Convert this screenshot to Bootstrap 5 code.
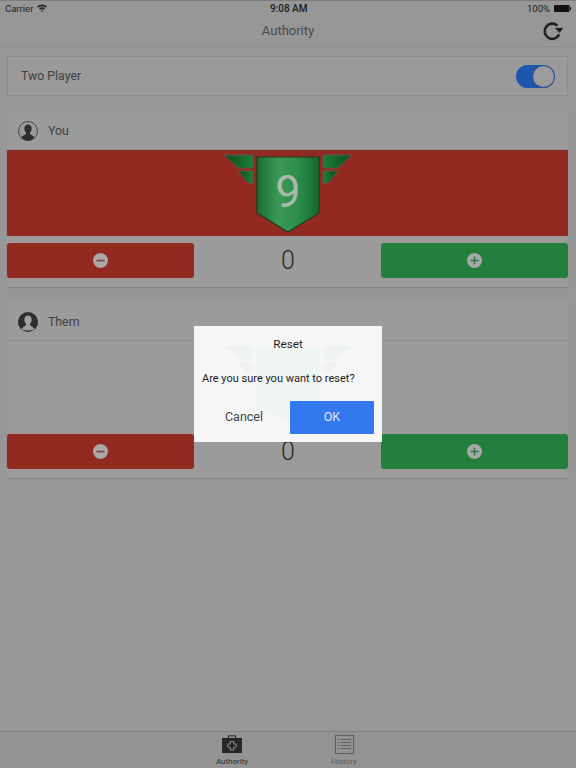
<!DOCTYPE html>
<html lang="en">
<head>
<meta charset="UTF-8" />
<meta name="viewport" content="width=device-width, initial-scale=1.0" />
<title>Authority</title>
<link rel="stylesheet" href="https://cdn.jsdelivr.net/npm/bootstrap@5.3.2/dist/css/bootstrap.min.css" />
<style>
  html, body { height: 100%; }
  body { font-family: Roboto, "Liberation Sans", sans-serif; background: #979797; color: #3a3a3a; }
  .app { width: 576px; height: 768px; overflow: hidden; position: relative; }
  .status-bar { height: 15px; font-size: 9.5px; line-height: 15px; color: #1c1c1c; padding: 0 5px; border-top: 1px solid #7d7d7d; }
  .status-time { font-weight: 500; font-size: 10px; margin-left: 3px; }
  .title-bar { height: 32px; border-bottom: 1px solid #8d8d8d; position: relative; font-size: 13px; color: #4a4a4a; }
  .refresh { position: absolute; right: 12px; top: 6px; }
  .content { padding: 9px 8px 0 7px; }
  .switch-card { height: 40px; background: #9a9a9a; border: 1px solid #8c8c8c; border-radius: 0; padding: 0 12px 0 13px; font-size: 12.3px; margin-bottom: 15px; color: #404040; }
  .toggle { width: 39px; height: 23px; border-radius: 12px; background: #1f56ad; position: relative; }
  .toggle::after { content: ""; position: absolute; right: 1px; top: 1px; width: 21px; height: 21px; border-radius: 50%; background: #9c9c9c; box-shadow: 0 0 1px #333; }
  .player-card { background: #9b9b9b; border: 0; border-radius: 0; box-shadow: 0 1px 1px #858585; margin-bottom: 15px; height: 176px; }
  .player-head { height: 39px; padding: 2px 10px 0 11px; border-bottom: 1px solid #8f8f8f; font-size: 12.3px; gap: 10px; color: #404040; }
  .level-band { height: 86px; display: flex; justify-content: center; align-items: flex-start; padding-top: 4px; }
  .level-band.active { background: #932a22; }
  .score-row { height: 35px; margin-top: 7px; }
  .score-btn { width: 187px; height: 35px; border: 0; padding: 0; border-radius: 3px; display: flex; align-items: center; justify-content: center; }
  .score-btn.minus { background: #932a22; }
  .score-btn.plus { background: #22803c; }
  .score-value { font-size: 25px; color: #2a2a2a; line-height: 35px; font-weight: 300; padding-left: 1px; }
  .tab-bar { position: absolute; left: 0; right: 0; bottom: 0; height: 37px; border-top: 1px solid #828282; background: #939393; }
  .tab-item { position: absolute; top: 3px; width: 60px; text-align: center; font-size: 8px; line-height: 9px; }
  .tab-item svg { margin-bottom: 3px; }
  .tab-one { left: 202px; color: #2c2c2c; }
  .tab-two { left: 314px; color: #5c5c5c; }
  .alert-box { position: absolute; left: 194px; top: 326px; width: 188px; height: 116px; background: rgba(252,252,252,.94); color: #1e1e1e; font-size: 11px; z-index: 5; }
  .alert-title { font-size: 11.7px; text-align: center; padding-top: 11px; line-height: 15px; }
  .alert-text { padding: 0 8px; margin-top: 19px; line-height: 15px; white-space: nowrap; }
  .alert-actions { display: flex; gap: 4px; padding: 0 8px; margin-top: 15px; }
  .alert-actions .btn { width: 84px; height: 33px; padding: 0; font-size: 12.5px; border: 0; border-radius: 1px; }
  .alert-actions .btn-cancel { color: #444; background: transparent; }
  .alert-actions .btn-ok { background: #3478f0; color: #dfe9fb; }
</style>
</head>
<body>
<div class="app">
  <div class="status-bar d-flex justify-content-between align-items-center">
    <span class="d-flex align-items-center gap-1">Carrier
      <svg width="10" height="8" viewBox="0 0 10 8"><path d="M0 2.6A7.2 7.2 0 0 1 10 2.6L8.9 3.8A5.6 5.6 0 0 0 1.1 3.8ZM2 4.7A4.4 4.4 0 0 1 8 4.7L6.9 5.8A2.8 2.8 0 0 0 3.1 5.8ZM3.9 6.7A1.6 1.6 0 0 1 6.1 6.7L5 8Z" fill="#222"/></svg>
    </span>
    <span class="status-time">9:08 AM</span>
    <span class="d-flex align-items-center gap-1">100%
      <svg width="17" height="7" viewBox="0 0 17 7"><rect width="15.5" height="7" rx="1" fill="#111"/><rect x="15.8" y="2" width="1.2" height="3" fill="#111"/></svg>
    </span>
  </div>
  <div class="title-bar d-flex align-items-center justify-content-center">
    Authority
    <svg class="refresh" width="22" height="22" viewBox="0 0 22 22"><path d="M17.2 13.4A7.6 7.6 0 1 1 15.4 4.6" fill="none" stroke="#222" stroke-width="2.6"/><path d="M12.8 7L21.4 6.8L17.6 12Z" fill="#222"/></svg>
  </div>

  <div class="content">
    <div class="card switch-card flex-row align-items-center justify-content-between">
      <span>Two Player</span>
      <span class="toggle"></span>
    </div>

    <div class="card player-card">
      <div class="player-head d-flex align-items-center">
        <svg width="20" height="20" viewBox="0 0 20 20"><circle cx="10" cy="10" r="9.5" fill="#9b9b9b" stroke="#2e2e2e" stroke-width=".8"/><path d="M3.6 17C4 14.6 7 14 8 13V11.6C6.8 10.4 6.2 8.6 6.4 6.8C6.6 4.8 8 3.4 10 3.4S13.4 4.8 13.6 6.8C13.8 8.6 13.2 10.4 12 11.6V13C13 14 16 14.6 16.4 17A9 9 0 0 1 3.6 17Z" fill="#2e2e2e"/></svg>
        <span>You</span>
      </div>
      <div class="level-band active">
        <svg width="130" height="80" viewBox="0 0 130 80">
          <defs>
            <linearGradient id="shieldA" x1="0" x2="1" y1="0" y2="0"><stop offset="0" stop-color="#1a6c33"/><stop offset=".35" stop-color="#3c9a55"/><stop offset=".7" stop-color="#2a8a48"/><stop offset="1" stop-color="#176530"/></linearGradient>
            <linearGradient id="wingL" x1="0" x2="1" y1="0" y2="0"><stop offset="0" stop-color="#0d4a1e"/><stop offset="1" stop-color="#1f8038"/></linearGradient>
            <linearGradient id="wingR" x1="1" x2="0" y1="0" y2="0"><stop offset="0" stop-color="#0d4a1e"/><stop offset="1" stop-color="#1f8038"/></linearGradient>
          </defs>
          <path d="M1 1H30V14H15Z" fill="url(#wingL)" stroke="#5c5c50" stroke-width=".8"/>
          <path d="M15 17H30V29H25Z" fill="url(#wingL)" stroke="#5c5c50" stroke-width=".8"/>
          <path d="M129 1H100V14H115Z" fill="url(#wingR)" stroke="#5c5c50" stroke-width=".8"/>
          <path d="M115 17H100V29H105Z" fill="url(#wingR)" stroke="#5c5c50" stroke-width=".8"/>
          <path d="M34 3H96V59L65 78L34 59Z" fill="url(#shieldA)" stroke="#17401f" stroke-width="1.2"/>
          <text x="65" y="53" text-anchor="middle" font-family="Roboto, sans-serif" font-size="45" fill="#a9b9ad">9</text>
        </svg>
      </div>
      <div class="score-row d-flex justify-content-between align-items-center">
        <button class="score-btn minus" type="button">
          <svg width="15" height="15" viewBox="0 0 15 15"><circle cx="7.5" cy="7.5" r="7.5" fill="#a8a8a8"/><rect x="3.5" y="6.7" width="8" height="1.7" fill="#8a3a38"/></svg>
        </button>
        <span class="score-value">0</span>
        <button class="score-btn plus" type="button">
          <svg width="15" height="15" viewBox="0 0 15 15"><circle cx="7.5" cy="7.5" r="7.5" fill="#a8a8a8"/><path d="M3.5 7.5H11.5M7.5 3.5V11.5" stroke="#2a7a48" stroke-width="1.5"/></svg>
        </button>
      </div>
    </div>

    <div class="card player-card">
      <div class="player-head d-flex align-items-center">
        <svg width="20" height="20" viewBox="0 0 20 20"><circle cx="10" cy="10" r="10" fill="#2e2e2e"/><path d="M3.8 17C4.2 14.8 7 14.2 8 13.2V11.8C6.8 10.6 6.2 8.6 6.4 6.8C6.6 4.8 8 3.4 10 3.4S13.4 4.8 13.6 6.8C13.8 8.6 13.2 10.6 12 11.8V13.2C13 14.2 15.8 14.8 16.2 17L16.4 17.8L10 18.4L3.6 17.8Z" fill="#a0a0a0"/></svg>
        <span>Them</span>
      </div>
      <div class="level-band">
        <svg width="130" height="80" viewBox="0 0 130 80">
          <g fill="#1f6f3a">
            <path d="M1 1H30V14H15Z"/><path d="M15 17H30V29H25Z"/>
            <path d="M129 1H100V14H115Z"/><path d="M115 17H100V29H105Z"/>
          </g>
          <path d="M34 3H96V59L65 78L34 59Z" fill="#2a8a48"/>
        </svg>
      </div>
      <div class="score-row d-flex justify-content-between align-items-center">
        <button class="score-btn minus" type="button">
          <svg width="15" height="15" viewBox="0 0 15 15"><circle cx="7.5" cy="7.5" r="7.5" fill="#a8a8a8"/><rect x="3.5" y="6.7" width="8" height="1.7" fill="#8a3a38"/></svg>
        </button>
        <span class="score-value">0</span>
        <button class="score-btn plus" type="button">
          <svg width="15" height="15" viewBox="0 0 15 15"><circle cx="7.5" cy="7.5" r="7.5" fill="#a8a8a8"/><path d="M3.5 7.5H11.5M7.5 3.5V11.5" stroke="#2a7a48" stroke-width="1.5"/></svg>
        </button>
      </div>
    </div>
  </div>

  <div class="alert-box">
    <div class="alert-title">Reset</div>
    <div class="alert-text">Are you sure you want to reset?</div>
    <div class="alert-actions">
      <button class="btn btn-cancel" type="button">Cancel</button>
      <button class="btn btn-ok" type="button">OK</button>
    </div>
  </div>

  <div class="tab-bar">
    <div class="tab-item tab-one">
      <svg class="d-block mx-auto" width="20" height="19" viewBox="0 0 20 19"><path d="M6.5 3V.8H13.5V3" fill="none" stroke="#2c2c2c"/><rect y="3" width="20" height="15" fill="#262626"/><path d="M8.2 6.5H11.8V9H14.2V12H11.8V15H8.2V12H5.8V9H8.2Z" fill="none" stroke="#8c8c8c"/></svg>
      <span>Authority</span>
    </div>
    <div class="tab-item tab-two">
      <svg class="d-block mx-auto" width="19" height="19" viewBox="0 0 19 19"><rect x=".5" y=".5" width="18" height="18" fill="none" stroke="#5f5f5f"/><path d="M3 4.5H4.5M6 4.5H16M3 7.5H4.5M6 7.5H16M3 10.5H4.5M6 10.5H16M3 13.5H4.5M6 13.5H16" stroke="#5f5f5f"/></svg>
      <span>History</span>
    </div>
  </div>
</div>
<script src="https://cdn.jsdelivr.net/npm/bootstrap@5.3.2/dist/js/bootstrap.bundle.min.js"></script>
</body>
</html>
